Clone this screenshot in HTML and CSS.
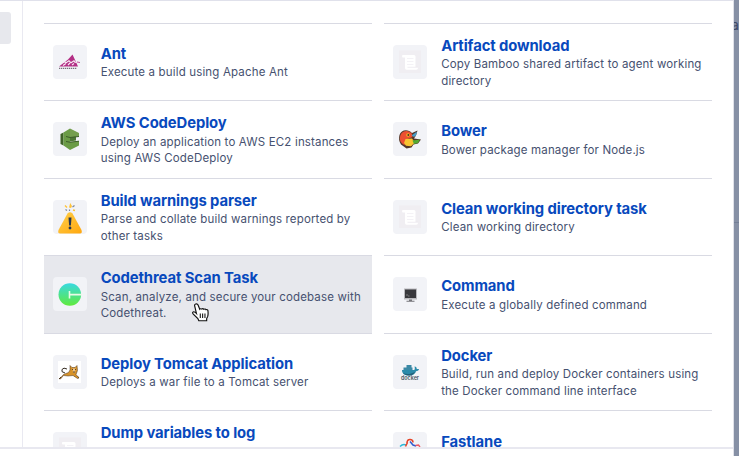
FILE: index.html
```html
<!DOCTYPE html>
<html lang="en">
<head>
<meta charset="utf-8">
<title>Task types</title>
<link rel="stylesheet" href="styles.css">
</head>
<body>
<svg width="0" height="0" class="defs">
  <defs>
    <linearGradient id="warn" x1="0" y1="0" x2="1" y2="1"><stop offset="0" stop-color="#ffd04a"/><stop offset="1" stop-color="#ffa70f"/></linearGradient>
    <linearGradient id="ct" x1="0" y1="0" x2="0" y2="1"><stop offset="0" stop-color="#38d9e2"/><stop offset="1" stop-color="#60ea3c"/></linearGradient>
    <symbol id="scroll" viewBox="0 0 34 34">
      <rect x="6" y="5.500" width="22" height="22.500" fill="#f0eef2"/>
      <path d="M9.500 10H21q1.500 0 1.500 1.500V22H25v1q0 1.700-1.700 1.700H13.500Q12 24.700 12 23V12.500H9.500q-1-1.300 0-2.500z" fill="#fff"/>
      <path d="M14 13.500h6.500M14 16.500h6.500M14 19.500h6.500" stroke="#f3f1f5" stroke-width=".9"/>
      <path d="M14.500 22.300H25" stroke="#e9e7ed" stroke-width=".7"/>
    </symbol>
  </defs>
</svg>
<div class="app">
  <div class="dialog">
    <div class="body">
      <aside class="side"><div class="tab"></div></aside>
      <main class="tasks">
        <article class="task">
          <svg class="icon" viewBox="0 0 34 34"><path d="M19.500 9.500 15 14.500 6 21.500H25L23 17z" fill="#b32f85"/><path d="M9 17.800l3-1 1 1 3-2 2 2 3-2 1 1.500 3-.5M10 20.500l3-2M15 20l2-2M19 20l2-1.500" stroke="#f7eaf4" stroke-width="1.100" fill="none"/><path d="M24 17l3 .5" stroke="#b32f85" stroke-width=".8"/><path d="M6 23.300h18" stroke="#77717c" stroke-width="1.300" stroke-dasharray="1.300 .7"/></svg>
          <div class="copy"><h3>Ant</h3><p>Execute a build using Apache Ant</p></div>
        </article>
        <article class="task">
          <svg class="icon"><use href="#scroll"/></svg>
          <div class="copy"><h3>Artifact download</h3><p>Copy Bamboo shared artifact to agent working<br>directory</p></div>
        </article>
        <article class="task">
          <svg class="icon" viewBox="0 0 34 34"><path d="M7.500 12l3-1.500v13L7.500 22z" fill="#3f6228"/><path d="M10.500 10.500 17 6.500v21.500l-6.500-4.500z" fill="#6a9b45"/><path d="M17 6.500 26 11v3.500l-9 1z" fill="#759f4e"/><path d="M17 15.500l6-1v4l-6 1z" fill="#4e7835"/><path d="M17 20l9-1v4.500L17 28z" fill="#6a9b45"/><path d="M13 14.500l4 1 9-1M13 19.500l4 .7 9-1" stroke="#3c5d28" fill="none"/></svg>
          <div class="copy"><h3>AWS CodeDeploy</h3><p>Deploy an application to AWS EC2 instances<br>using AWS CodeDeploy</p></div>
        </article>
        <article class="task">
          <svg class="icon" viewBox="0 0 34 34"><path d="M6.500 13C8 7.500 15 6.500 19 11l5.500-2.500-1.500 5-2 3 7 1-3 4-4.500 1-2 3-5 1L8 22.500Q5 18 6.500 13z" fill="#543729"/><path d="M7.500 13c2-4.500 8-5.500 11.500-1l.5 3-5 2-3 6c-4-2-5.500-5-4-10z" fill="#ec4f31"/><path d="M12.500 17l6.500-.5 3 4-4 3.800-5-.5-2-2.800z" fill="#f8c430"/><path d="M19.500 18.500l7.500-1-2 3.500-4 1z" fill="#54aa31"/><path d="M18.500 13.500l5.500-4-1 4-2 1.500z" fill="#4a9cc6"/><circle cx="15" cy="13" r="1.800" fill="#f3b71e"/><circle cx="15.300" cy="13" r=".9" fill="#432c23"/></svg>
          <div class="copy"><h3>Bower</h3><p>Bower package manager for Node.js</p></div>
        </article>
        <article class="task">
          <svg class="icon" viewBox="0 0 34 34"><path d="M14.500 13.500q2.500-2.500 5 0L28.500 30q1 3.500-1.500 3.500H7Q4.500 33.500 5.500 30z" fill="url(#warn)"/><path d="M15.500 17.500h3l-.6 8h-1.800z" fill="#263550"/><circle cx="17" cy="28" r="1.400" fill="#263550"/><path d="M16 7.500l1.200-4.500L19 6l-1 2z" fill="#ffc338"/><path d="M12 5.500l2 2M20 10l2 .5" stroke="#ffc338" stroke-width="1.400"/><path d="M12.500 9.500l1.500 1M19.500 7l2-1.500M16.500 9.500v1.500" stroke="#7d8698" stroke-width="1.200"/></svg>
          <div class="copy"><h3>Build warnings parser</h3><p>Parse and collate build warnings reported by<br>other tasks</p></div>
        </article>
        <article class="task">
          <svg class="icon"><use href="#scroll"/></svg>
          <div class="copy"><h3>Clean working directory task</h3><p>Clean working directory</p></div>
        </article>
        <article class="task selected">
          <svg class="icon" viewBox="0 0 34 34"><circle cx="16.800" cy="17.500" r="11.300" fill="url(#ct)"/><path d="M16.500 14v7.500M17 17.600h12" stroke="#e9fae6" stroke-width="1.600"/></svg>
          <div class="copy"><h3>Codethreat Scan Task</h3><p>Scan, analyze, and secure your codebase with<br>Codethreat.</p></div>
        </article>
        <article class="task">
          <svg class="icon" viewBox="0 0 34 34"><path d="M11 11.500h13v11H11z" fill="#b9b9bd"/><path d="M12 12.500h11v8.500H12z" fill="#38383c"/><path d="M13.500 17l1 1-1 1M15 19h1.500" stroke="#aaa" stroke-width=".6" fill="none"/><path d="M16 22.500h3v1.300h2.500v1h-8v-1H16z" fill="#747479"/></svg>
          <div class="copy"><h3>Command</h3><p>Execute a globally defined command</p></div>
        </article>
        <article class="task">
          <svg class="icon" viewBox="0 0 34 34"><path d="M5 6h23v22H5z" fill="#fff"/><path d="M12 18q-4.500-1-3-3.500t5-.5M26 22.500l-5-2M8 22l-2 2" stroke="#332a20" fill="none" stroke-width="1"/><path d="M6.500 24l4-4.500 5-2 1.500-2.500v-4.500l2 2h3l2-2 .5 5-1.500 4 3 3.500-1.500.5-4.500-3-5 .5-4.500-.5-3 3.500z" fill="#d69229" stroke="#4a3520" stroke-width=".5"/><path d="M19.500 13.500h3l-.5 4h-2z" fill="#f0c58a"/><path d="M19 14.500h1M22 14.500h1M20 17h2" stroke="#332a20" stroke-width=".8"/></svg>
          <div class="copy"><h3>Deploy Tomcat Application</h3><p>Deploys a war file to a Tomcat server</p></div>
        </article>
        <article class="task">
          <svg class="icon" viewBox="0 0 34 34"><path d="M9 15h12c1 0 1-2 .5-3.500 2 0 2 1 2.300 2.500L26 14c0 1.500-2 2.200-3 2.200-1 3.300-4 4.300-7 4.300-4 0-7-1.500-7-5.500z" fill="#2b8baa"/><path d="M10.500 12.500h9V15h-9zM13.500 10h5v2.500h-5z" fill="#3b88a5"/><path d="M10 18c4 2 8 1 12-1-1 2-3 3.500-6 3.500s-5-1-6-2.500z" fill="#226078"/><text x="8" y="25" class="wordmark" textLength="18" lengthAdjust="spacingAndGlyphs">docker</text></svg>
          <div class="copy"><h3>Docker</h3><p>Build, run and deploy Docker containers using<br>the Docker command line interface</p></div>
        </article>
        <article class="task">
          <svg class="icon"><use href="#scroll"/></svg>
          <div class="copy two-lines"><h3>Dump variables to log</h3></div>
        </article>
        <article class="task">
          <svg class="icon" viewBox="0 0 34 34"><path d="M7 14.500q3-3 6-1.500" stroke="#28b9d9" stroke-width="1.400" fill="none"/><path d="M12.500 14.500l2-4" stroke="#e54428" stroke-width="1.500"/><path d="M14 11q0-3.500 3-3.500t3 3" stroke="#e54428" stroke-width="1.500" fill="none"/><path d="M17 9.500l3 3.500 3 1" stroke="#315ccd" stroke-width="1.500" fill="none"/><path d="M22.500 13.500l3-.5 1.500 2" stroke="#ef5a63" stroke-width="1.400" fill="none"/></svg>
          <div class="copy one-line"><h3>Fastlane</h3></div>
        </article>
      </main>
    </div>
    <footer class="footer"></footer>
  </div>
  <div class="backdrop"><span>a</span><hr></div>
</div>
<svg class="cursor" viewBox="0 0 16 19" preserveAspectRatio="none"><path d="M3.500 1Q5 .4 5.700 2l1.600 4.300q.7-1.100 1.900-.2 1-.9 2 .2 1.200-.8 2 .4 1.500-.6 1.800 1 .4 3.500-.2 5.700l-1 2.100v2.200H6.400L5.500 15.500 1 10.800Q0 9.200 1.500 8.800q1-.2 2.700 1.700L2.500 2.800Q2.200 1.500 3.500 1z" fill="#fff" stroke="#111" stroke-width="1.100"/><path d="M7.800 10.500v4.500M10 10.500v4.500M12.200 10.500v4.500" stroke="#111"/></svg>
</body>
</html>
```

FILE: styles.css
```css
* { box-sizing: border-box; }
body { margin: 0; font-family: Inter, sans-serif; background: #fff; overflow: hidden; }
.defs, .cursor { position: absolute; }
.app { display: flex; width: 739px; height: 456px; overflow: hidden; }
.dialog { flex: 1; display: flex; flex-direction: column; border-top: 1px solid #e0e1eb; border-right: 1px solid #dfe1e9; }
.body { display: flex; height: 445.500px; flex: none; overflow: hidden; }
.side { width: 23px; flex: none; border-right: 1px solid #e9e9f1; padding-top: 11px; }
.tab { width: 11px; height: 32px; background: #e7e8ed; border-radius: 0 3px 3px 0; }
.tasks { display: grid; grid-template-columns: 328px 328px; grid-auto-rows: 77.5px; column-gap: 12.5px; padding: 21.700px 0 0 20.700px; flex: none; }
.task { display: flex; align-items: center; padding-left: 9px; border-top: 1px solid #d9dae3; }
.selected { background: #e7e8ed; }
.icon { width: 34px; height: 34px; flex: none; border-radius: 4px; background: #f2f3f7; }
.copy { margin-left: 14px; padding-top: 1px; white-space: nowrap; }
.one-line { height: 37.500px; }
.two-lines { height: 54px; }
h3 { margin: 0; font-size: 14.800px; line-height: 20px; font-weight: 650; letter-spacing: -.09px; color: #0849bd; }
p { margin: 0; padding-top: .4px; font-size: 11.500px; line-height: 16.500px; color: #465170; letter-spacing: .16px; }
.footer { flex: 1; border-top: 2px solid #e8e8f0; }
.backdrop { width: 5px; background: #8690a5; overflow: hidden; padding-top: 17px; font-size: 14px; line-height: 16px; color: #3d4866; }
.backdrop span { margin-left: -3px; }
.backdrop hr { margin: 189px 0 0; border: 0; height: 1px; background: #747f96; }
.cursor { width: 17px; height: 19px; left: 192px; top: 303px; }
.wordmark { font: 600 6px Inter, sans-serif; fill: #47555f; }
```
